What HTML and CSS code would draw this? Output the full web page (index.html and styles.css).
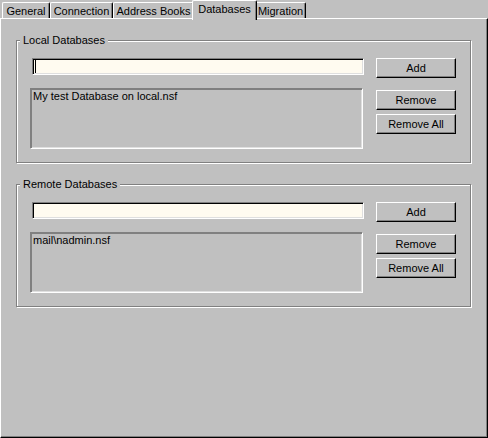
FILE: index.html
```html
<!DOCTYPE html>
<html lang="en">
<head>
    <meta charset="UTF-8">
    <title>Databases</title>
    <link rel="stylesheet" href="styles.css">
</head>
<body>
    <div class="tabs">
        <div class="tab tab-general">General</div>
        <div class="tab tab-connection">Connection</div>
        <div class="tab tab-address">Address Books</div>
        <div class="tab tab-databases selected">Databases</div>
        <div class="tab tab-migration">Migration</div>
    </div>

    <div class="panel">
        <fieldset class="group">
            <legend>Local Databases</legend>
            <div class="group-body">
                <div class="fields">
                    <div class="textbox"><span class="caret"></span></div>
                    <div class="listbox">
                        <div class="list-item">My test Database on local.nsf</div>
                    </div>
                </div>
                <div class="buttons">
                    <button class="btn btn-add">Add</button>
                    <button class="btn btn-remove">Remove</button>
                    <button class="btn btn-remove-all">Remove All</button>
                </div>
            </div>
        </fieldset>

        <fieldset class="group">
            <legend>Remote Databases</legend>
            <div class="group-body">
                <div class="fields">
                    <div class="textbox"></div>
                    <div class="listbox">
                        <div class="list-item">mail\nadmin.nsf</div>
                    </div>
                </div>
                <div class="buttons">
                    <button class="btn btn-add">Add</button>
                    <button class="btn btn-remove">Remove</button>
                    <button class="btn btn-remove-all">Remove All</button>
                </div>
            </div>
        </fieldset>
    </div>
</body>
</html>
```

FILE: styles.css
```css
html, body {
    margin: 0;
    padding: 0;
    background-color: #c0c0c0;
}
body {
    width: 488px;
    height: 438px;
    overflow: hidden;
    font-family: "Liberation Sans", Arial, sans-serif;
    font-size: 11px;
    line-height: 13px;
    color: #000;
}

/* tab strip */
.tabs {
    display: flex;
    align-items: flex-end;
    height: 18px;
    padding-left: 2px;
}
.tab {
    box-sizing: border-box;
    height: 16px;
    padding: 2px 0 0 0;
    text-align: center;
    white-space: nowrap;
    border-top: 1px solid #fff;
    border-left: 1px solid #fff;
    border-right: 1px solid #000;
    border-top-left-radius: 2px;
    border-top-right-radius: 2px;
    box-shadow: inset -1px 0 0 #808080;
}
.tab-general { width: 48px; }
.tab-connection { width: 63px; }
.tab-address { width: 81px; }
.tab-databases { width: 61px; }
.tab-migration { width: 51px; }
.tab.selected {
    position: relative;
    z-index: 1;
    height: 20px;
    width: 65px;
    margin: 0 -2px -2px -2px;
    background-color: #c0c0c0;
}

/* page */
.panel {
    box-sizing: border-box;
    height: 420px;
    padding: 15px 0 0 15px;
    border-top: 1px solid #fff;
    border-left: 1px solid #fff;
    border-right: 1px solid #000;
    border-bottom: 1px solid #000;
    box-shadow: inset -1px -1px 0 #808080;
}

/* group boxes */
.group {
    box-sizing: border-box;
    width: 455px;
    margin: 0 0 15px 0;
    padding: 0 14px 13px 13px;
    border: 1px solid #808080;
    box-shadow: inset 1px 1px 0 #fff, 1px 1px 0 #fff;
}
.group legend {
    margin-left: -10px;
    padding: 0 3px;
    line-height: 13px;
    background-color: #c0c0c0;
}
.group-body {
    display: flex;
    gap: 12px;
}
.fields {
    width: 334px;
}
.textbox {
    box-sizing: border-box;
    position: relative;
    width: 332px;
    height: 17px;
    margin: 11px 0 0 2px;
    background-color: #fffbf0;
    border-top: 1px solid #808080;
    border-left: 1px solid #808080;
    border-right: 1px solid #fff;
    border-bottom: 1px solid #fff;
    box-shadow: inset 1px 1px 0 #000, inset -1px -1px 0 #dfdfdf;
}
.caret {
    position: absolute;
    left: 2px;
    top: 1px;
    width: 1px;
    height: 13px;
    background-color: #000;
}
.listbox {
    box-sizing: border-box;
    width: 333px;
    height: 61px;
    margin-top: 13px;
    padding: 1px 1px;
    border-top: 1px solid #808080;
    border-left: 1px solid #808080;
    border-right: 1px solid #fff;
    border-bottom: 1px solid #fff;
    box-shadow: inset 1px 1px 0 #808080, inset -1px -1px 0 #dfdfdf;
}
.list-item {
    padding-left: 1px;
}

/* buttons */
.buttons {
    display: flex;
    flex-direction: column;
    width: 80px;
    padding-top: 11px;
}
.btn {
    box-sizing: border-box;
    height: 20px;
    padding: 0;
    font-family: inherit;
    font-size: 11px;
    line-height: 13px;
    color: #000;
    background-color: #c0c0c0;
    border-top: 1px solid #fff;
    border-left: 1px solid #fff;
    border-right: 1px solid #000;
    border-bottom: 1px solid #000;
    box-shadow: inset -1px -1px 0 #808080;
    border-radius: 0;
}
.btn-remove {
    margin-top: 12px;
}
.btn-remove-all {
    margin-top: 4px;
}
```
